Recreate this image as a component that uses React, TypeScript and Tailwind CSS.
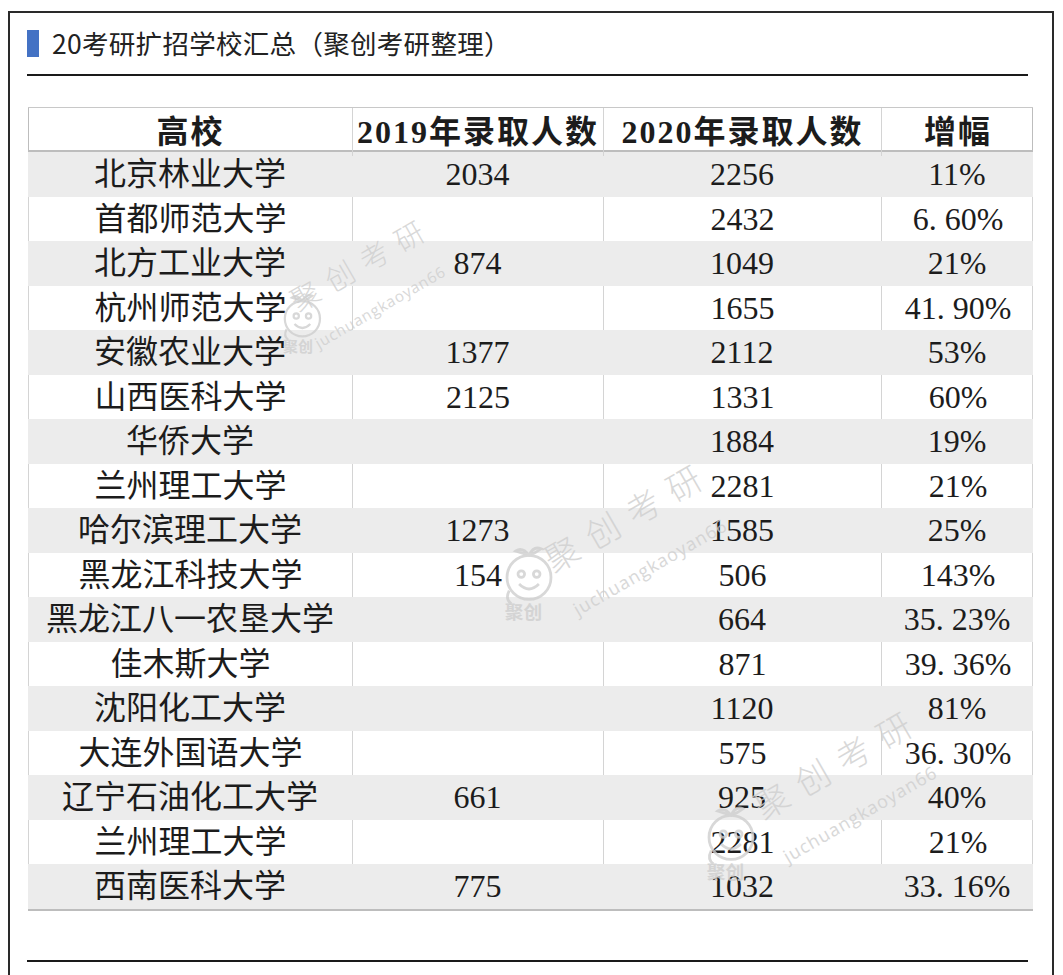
import React from "react";

const rows = [
  ["北京林业大学", "2034", "2256", "11%"],
  ["首都师范大学", "", "2432", "6. 60%"],
  ["北方工业大学", "874", "1049", "21%"],
  ["杭州师范大学", "", "1655", "41. 90%"],
  ["安徽农业大学", "1377", "2112", "53%"],
  ["山西医科大学", "2125", "1331", "60%"],
  ["华侨大学", "", "1884", "19%"],
  ["兰州理工大学", "", "2281", "21%"],
  ["哈尔滨理工大学", "1273", "1585", "25%"],
  ["黑龙江科技大学", "154", "506", "143%"],
  ["黑龙江八一农垦大学", "", "664", "35. 23%"],
  ["佳木斯大学", "", "871", "39. 36%"],
  ["沈阳化工大学", "", "1120", "81%"],
  ["大连外国语大学", "", "575", "36. 30%"],
  ["辽宁石油化工大学", "661", "925", "40%"],
  ["兰州理工大学", "", "2281", "21%"],
  ["西南医科大学", "775", "1032", "33. 16%"],
];

const serif = "font-['Liberation_Serif','Noto_Sans_CJK_SC',serif]";

// mascot drawing used in the watermark
const Mascot = () => (
  <svg width="66" height="80" viewBox="0 0 60 72" fill="none" stroke="#cfcfcf" strokeWidth="2.5">
    <path d="M30 10 q-6 -8 -12 -4 q6 2 12 4 q4 -9 11 -6 q-5 4 -11 6" />
    <circle cx="30" cy="30" r="20" />
    <circle cx="23" cy="27" r="3" />
    <circle cx="37" cy="27" r="3" />
    <path d="M21 36 q9 9 18 0" />
    <path d="M12 42 q-4 8 2 12" />
    <text x="8" y="68" fontSize="17" fill="#cfcfcf" stroke="none" fontWeight="700" fontFamily="Noto Sans CJK SC, sans-serif">聚创</text>
  </svg>
);

const WatermarkText = () => (
  <div className="font-['Noto_Sans_CJK_SC',sans-serif] text-[#cfcfcf] whitespace-nowrap">
    <div className="text-[34px] leading-[34px] tracking-[13px] font-light">聚创考研</div>
    <div className="mt-[28px] text-[18px] leading-[22px] tracking-[1px] font-['Open_Sans','Noto_Sans',sans-serif]">juchuangkaoyan66</div>
  </div>
);

export default function App() {
  return (
    <div className="relative h-[975px] w-[1063px] overflow-hidden bg-white">
      <div className="ml-[8px] mt-[11px] h-[1000px] w-[1046px] border-x-2 border-t-2 border-[#2a2a2a]">
        {/* title */}
        <div className="mt-[17px] ml-[17px] flex h-[27px] items-center">
          <div className="h-[27px] w-[12px] bg-[#4472c4]" />
          <div className="ml-[13px] font-['Noto_Sans_CJK_SC',sans-serif] text-[26.5px] leading-none tracking-[0.3px] text-[#222]">
            20考研扩招学校汇总（聚创考研整理）
          </div>
        </div>
        <div className="ml-[17px] mt-[17px] h-[2px] w-[1001px] bg-[#1a1a1a]" />

        {/* table */}
        <div className={`ml-[18px] mt-[31px] w-[1005px] border-t border-[#c8c8c8] ${serif} text-[#1c1c1c]`}>
          <div className="grid h-[44px] grid-cols-[324px_251px_278px_152px] border-b-2 border-x border-[#bdbdbd] bg-white text-[32px] font-bold tracking-[2px]">
            <div className="flex items-center justify-center border-r border-[#d4d4d4]">高校</div>
            <div className="flex items-center justify-center border-r border-[#d4d4d4]">2019年录取人数</div>
            <div className="flex items-center justify-center border-r border-[#d4d4d4]">2020年录取人数</div>
            <div className="flex items-center justify-center">增幅</div>
          </div>
          {rows.map((r, i) => {
            const shaded = i % 2 === 0;
            const line = shaded ? "" : "border-r border-[#d4d4d4]";
            return (
              <div
                key={i}
                className={`grid h-[44.5px] grid-cols-[324px_251px_278px_152px] text-[32px] leading-none ${
                  shaded ? "bg-[#ececec]" : "bg-white border-x border-[#d4d4d4]"
                }`}
              >
                <div className={`flex items-center justify-center ${line}`}>{r[0]}</div>
                <div className={`flex items-center justify-center ${line}`}>{r[1]}</div>
                <div className={`flex items-center justify-center ${line}`}>{r[2]}</div>
                <div className="flex items-center justify-center">{r[3]}</div>
              </div>
            );
          })}
          <div className="h-[2px] bg-[#bdbdbd]" />
        </div>

        <div className="ml-[17px] mt-[49px] h-[2px] w-[1001px] bg-[#1a1a1a]" />
      </div>

      {/* watermarks */}
      <div className="pointer-events-none absolute left-[276px] top-[292px] opacity-80">
        <div className="scale-[0.8] origin-top-left">
          <Mascot />
        </div>
      </div>
      <div className="pointer-events-none absolute left-[285px] top-[290px] origin-top-left rotate-[-30deg] scale-[0.85] opacity-80">
        <WatermarkText />
      </div>

      <div className="pointer-events-none absolute left-[496px] top-[544px] opacity-80">
        <Mascot />
      </div>
      <div className="pointer-events-none absolute left-[538px] top-[547px] origin-top-left rotate-[-30deg] opacity-80">
        <WatermarkText />
      </div>

      <div className="pointer-events-none absolute left-[698px] top-[804px] opacity-80">
        <Mascot />
      </div>
      <div className="pointer-events-none absolute left-[748px] top-[794px] origin-top-left rotate-[-30deg] opacity-80">
        <WatermarkText />
      </div>
    </div>
  );
}
